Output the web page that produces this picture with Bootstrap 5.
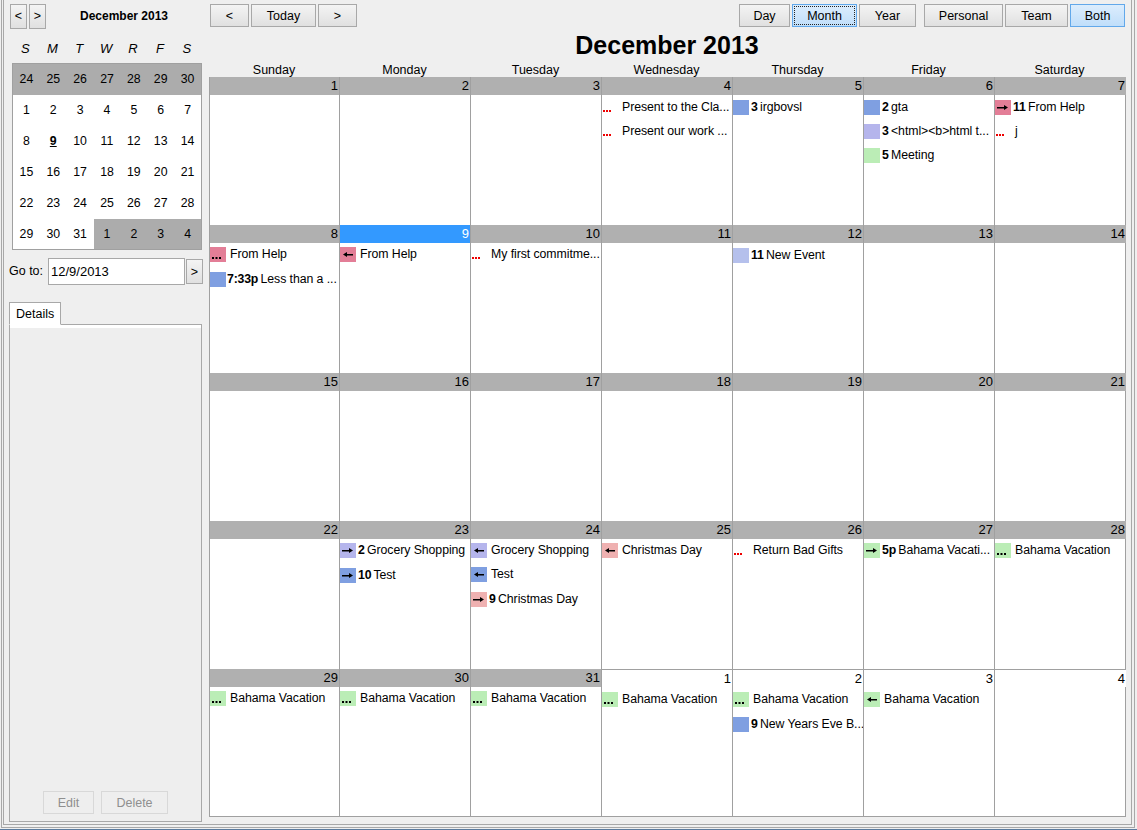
<!DOCTYPE html>
<html lang="en">
<head>
<meta charset="UTF-8" />
<title>Calendar</title>
<link href="https://cdn.jsdelivr.net/npm/bootstrap@5.3.3/dist/css/bootstrap.min.css" rel="stylesheet" />
<style>
  html,body{ height:830px; overflow:hidden; }
  body{ background:#efefef; color:#000; font-family:"Liberation Sans",Arial,sans-serif; font-size:12.3px; line-height:15px; }
  .app-outer{ height:828px; margin:0 2px 0 1px; padding:0 2px 2px 1px; border:1px solid #a8a8a8; border-top:0; }
  .app-frame{ height:825px; padding:4px 0 0 4px; border:1px solid #a8a8a8; border-top:0; }
  .app-foot{ height:1px; margin-top:1px; background:#5b7b9e; }

  .swing-btn{ --bs-btn-padding-y:0; --bs-btn-padding-x:0; --bs-btn-font-size:12.5px; --bs-btn-border-radius:0; --bs-btn-line-height:22px; --bs-btn-color:#000; --bs-btn-hover-color:#000;
    --bs-btn-border-color:#a8a8a8; --bs-btn-hover-border-color:#a8a8a8; background:linear-gradient(#f4f4f4,#e0e0e0); height:23px; }
  .swing-btn.on{ border-color:#62a8ea; background:linear-gradient(#dcedfd,#c0defa); }
  .swing-btn.focused{ outline:1px dotted #222; outline-offset:-3px; }
  .swing-btn:disabled{ --bs-btn-disabled-color:#8f8f8f; --bs-btn-disabled-border-color:#d8d8d8; --bs-btn-disabled-opacity:1; background:#eeeeee; }
  .ms-btn{ margin-left:2px; } .ms-grp{ margin-left:8px; }

  .side-pane{ width:195px; flex:none; }
  .mini-nav{ height:25px; padding-left:2px; }
  .mini-nav .swing-btn{ width:17px; height:25px; line-height:23px; }
  .mini-title{ font-weight:700; font-size:12px; flex:1; text-align:center; padding-right:1px; }
  .mini-heads{ display:grid; grid-template-columns:repeat(7,26.9px); margin:11px 0 0 4px; height:23px; line-height:17px; font-size:13px; font-style:italic; text-align:center; }
  .mini-cal{ display:grid; grid-template-columns:repeat(7,1fr); grid-template-rows:repeat(5,31px) 30px; height:187px; width:190px; margin-left:4px; border:1px solid #a0a0a0; background:#fff; }
  .mini-cal div{ text-align:center; line-height:31px; }
  .mini-cal .off{ background:#acacac; }
  .mini-cal .sel{ font-weight:700; text-decoration:underline; }
  .goto-row{ margin-top:8px; padding-left:1px; height:27px; }
  .goto-row label{ width:39px; font-size:12.5px; }
  .goto-input{ width:137px; height:27px; padding:0 2px; border:1px solid #a8a8a8; border-radius:0; font-size:13px; line-height:25px; color:#000; }
  .goto-row .swing-btn{ width:17px; height:25px; margin-left:1px; }

  .detail-tabs{ margin:17px 0 0 1px; width:193px; --bs-nav-tabs-border-color:#a8a8a8; --bs-nav-tabs-border-radius:0; --bs-nav-tabs-link-active-bg:#fff; --bs-nav-tabs-link-active-border-color:#a8a8a8 #a8a8a8 #fff; }
  .detail-tabs .nav-link{ padding:4px 6px 2px; font-size:12.5px; line-height:15px; color:#000; width:52px; }
  .detail-box{ margin-left:1px; width:193px; height:497px; border:1px solid #a8a8a8; border-top:0; box-shadow:inset 0 3px #fff; padding:0 0 7px 33px; background:#eeeeee; }
  .detail-box .swing-btn{ width:51px; }
  .detail-box .swing-btn + .swing-btn{ width:67px; margin-left:7px; }

  .main-pane{ margin-left:6px; width:917px; }
  .top-bar{ height:23px; padding:0 1px; }
  .w-back{ width:39px; } .w-today{ width:65px; }
  .w-day{ width:51px; } .w-month{ width:65px; } .w-year{ width:57px; }
  .w-personal{ width:79px; } .w-team{ width:63px; } .w-both{ width:55px; }
  .big-title{ font-size:25px; font-weight:700; line-height:30px; text-align:center; margin:3px 0 0 0; padding-right:1px; height:31px; }
  .day-heads{ display:grid; grid-template-columns:130px repeat(6,131px); height:16px; line-height:18px; text-align:center; font-size:12.5px; }
  .month-grid{ display:grid; grid-template-columns:130px repeat(6,131px); grid-auto-rows:148px; height:740px; width:917px; border:1px solid #a0a0a0; border-top:0; background:#fff; }
  .day-cell{ border-right:1px solid #a0a0a0; min-width:0; }
  .day-cell:nth-child(7n){ border-right:0; }
  .day-num{ height:18px; padding-right:1px; text-align:right; font-size:13px; line-height:17px; background:#b0b0b0; }
  .day-num.now{ background:#3399ff; color:#fff; }
  .day-num.next{ background:#fff; border-top:1px solid #a0a0a0; }
  .day-list{ padding-top:4px; }
  .day-list.p5{ padding-top:5px; }
  .cal-evt{ display:flex; height:15px; margin-bottom:9px; line-height:15px; letter-spacing:-.06px; white-space:nowrap; overflow:hidden; }
  .cal-evt.far{ margin-bottom:10px; }
  .cal-evt b{ letter-spacing:-.2px; margin-right:-1px; }
  .evt-box{ width:16px; height:15px; flex:none; margin-right:4px; display:block; }
  .evt-box.tight{ margin-right:2px; }
  .evt-box.tighter{ margin-right:1px; }
  .c-pink{ background:#e37e97; } .c-blue{ background:#7f9fe1; } .c-lav{ background:#b5b5ec; }
  .c-green{ background:#bbedb6; } .c-salmon{ background:#efb1b1; } .c-sky{ background:#b5c0ec; }
</style>
</head>
<body>
<svg width="0" height="0" class="d-block">
  <symbol id="i-right" viewBox="0 0 16 15"><path d="M2 7h7V5l4 2.500L9 10V8.500H2z"/></symbol>
  <symbol id="i-left" viewBox="0 0 16 15"><path d="M13 7H7V5L3 7.500 7 10V8.500h6z"/></symbol>
  <symbol id="i-dots" viewBox="0 0 16 15"><path d="M2 10h2v2H2zM5.500 10h2v2h-2zM9 10h2v2H9z"/></symbol>
  <symbol id="i-rdots" viewBox="0 0 16 15"><path fill="#ee0000" d="M1 10h2v2H1zM4 10h2v2H4zM7 10h2v2H7z"/></symbol>
</svg>
<div class="app-outer">
<div class="app-frame d-flex">
  <aside class="side-pane d-flex flex-column">
    <div class="mini-nav d-flex align-items-center">
      <button class="btn swing-btn">&lt;</button>
      <button class="btn swing-btn ms-btn">&gt;</button>
      <div class="mini-title">December 2013</div>
    </div>
    <div class="mini-heads"><span>S</span><span>M</span><span>T</span><span>W</span><span>R</span><span>F</span><span>S</span></div>
    <div id="miniCal" class="mini-cal"></div>
    <div class="goto-row d-flex align-items-center">
      <label for="gotoDate">Go to:</label>
      <input id="gotoDate" class="form-control goto-input" value="12/9/2013">
      <button class="btn swing-btn">&gt;</button>
    </div>
    <ul class="nav nav-tabs detail-tabs">
      <li class="nav-item"><a class="nav-link active" href="#">Details</a></li>
    </ul>
    <div class="detail-box d-flex align-items-end">
      <button class="btn swing-btn" disabled>Edit</button>
      <button class="btn swing-btn" disabled>Delete</button>
    </div>
  </aside>
  <main class="main-pane d-flex flex-column">
    <div class="top-bar d-flex justify-content-between">
      <div class="d-flex">
        <button class="btn swing-btn w-back">&lt;</button>
        <button class="btn swing-btn w-today ms-btn">Today</button>
        <button class="btn swing-btn w-back ms-btn">&gt;</button>
      </div>
      <div class="d-flex">
        <button class="btn swing-btn w-day">Day</button>
        <button class="btn swing-btn w-month on focused ms-btn">Month</button>
        <button class="btn swing-btn w-year ms-btn">Year</button>
        <button class="btn swing-btn w-personal ms-grp">Personal</button>
        <button class="btn swing-btn w-team ms-btn">Team</button>
        <button class="btn swing-btn w-both on ms-btn">Both</button>
      </div>
    </div>
    <h1 class="big-title">December 2013</h1>
    <div class="day-heads"><span>Sunday</span><span>Monday</span><span>Tuesday</span><span>Wednesday</span><span>Thursday</span><span>Friday</span><span>Saturday</span></div>
    <div id="monthGrid" class="month-grid"></div>
  </main>
</div>
</div>
<div class="app-foot"></div>
<script>
// [colour, icon, bold prefix, text, wider gap below]
const R='right',L='left',D='dots',Q='rdots';
const Ev={
 '1-3':[5,[null,Q,'','Present to the Cla...'],[null,Q,'','Present our work ...']],
 '1-4':[5,['c-blue','','3','irgbovsl']],
 '1-5':[5,['c-blue','','2','gta'],['c-lav','','3','<html><b>html t...'],['c-green','','5','Meeting']],
 '1-6':[5,['c-pink',R,'11','From Help'],[null,Q,'','j']],
 '2-0':[4,['c-pink',D,'','From Help',1],['c-blue','','7:33p','Less than a ...']],
 '2-1':[4,['c-pink',L,'','From Help']],
 '2-2':[4,[null,Q,'','My first commitme...']],
 '2-4':[5,['c-sky','','11','New Event']],
 '4-1':[4,['c-lav',R,'2','Grocery Shopping',1],['c-blue',R,'10','Test']],
 '4-2':[4,['c-lav',L,'','Grocery Shopping'],['c-blue',L,'','Test',1],['c-salmon',R,'9','Christmas Day']],
 '4-3':[4,['c-salmon',L,'','Christmas Day']],
 '4-4':[4,[null,Q,'','Return Bad Gifts']],
 '4-5':[4,['c-green',R,'5p','Bahama Vacati...']],
 '4-6':[4,['c-green',D,'','Bahama Vacation']],
 '5-0':[4,['c-green',D,'','Bahama Vacation']],
 '5-1':[4,['c-green',D,'','Bahama Vacation']],
 '5-2':[4,['c-green',D,'','Bahama Vacation']],
 '5-3':[5,['c-green',D,'','Bahama Vacation']],
 '5-4':[5,['c-green',D,'','Bahama Vacation',1],['c-blue','','9','New Years Eve B...']],
 '5-5':[5,['c-green',L,'','Bahama Vacation']]
};
const esc=s=>s.replace(/&/g,'&amp;').replace(/</g,'&lt;').replace(/>/g,'&gt;');
function evtHtml(e){
  const [col,ic,pre,txt,far]=e;
  const svg=ic?`<svg width="16" height="15"><use href="#i-${ic}"/></svg>`:'';
  const gap=pre?(pre.length>2?' tighter':' tight'):'';
  return `<div class="cal-evt${far?' far':''}"><span class="evt-box ${col||''}${gap}">${svg}</span><span>${pre?`<b>${pre}</b> `:''}${esc(txt)}</span></div>`;
}
let html='';
for(let r=1;r<=5;r++)for(let c=0;c<7;c++){
  const n=(r-1)*7+c+1, day=n>31?n-31:n;
  const cls=n===9?' now':(n>31?' next':'');
  const ev=Ev[r+'-'+c]||[4];
  html+=`<div class="day-cell"><div class="day-num${cls}">${day}</div><div class="day-list${ev[0]===5?' p5':''}">${ev.slice(1).map(evtHtml).join('')}</div></div>`;
}
document.getElementById('monthGrid').innerHTML=html;

let mini='';
for(let i=0;i<42;i++){
  const d=i<7?24+i:(i<38?i-6:i-37);
  const off=i<7||i>=38;
  mini+=`<div class="${off?'off':''}${d===9&&!off?' sel':''}">${d}</div>`;
}
document.getElementById('miniCal').innerHTML=mini;
</script>
</body>
</html>
